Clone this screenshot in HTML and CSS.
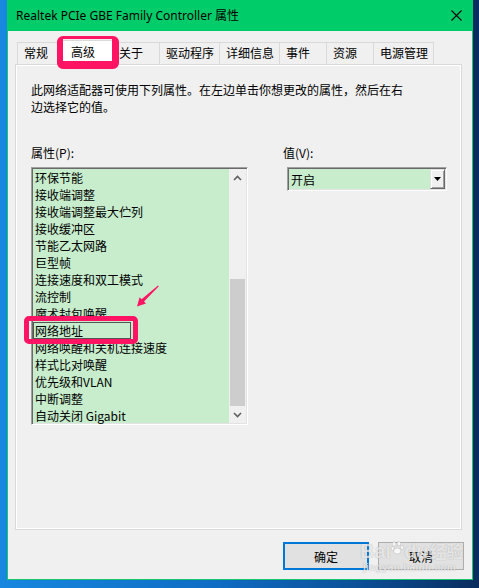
FILE: index.html
```html
<!DOCTYPE html>
<html lang="zh-CN">
<head>
<meta charset="utf-8">
<title>Realtek PCIe GBE Family Controller 属性</title>
<link rel="stylesheet" href="styles.css">
</head>
<body>
<div class="window">
  <div class="titlebar">
    <span class="title">Realtek PCIe GBE Family Controller 属性</span>
    <svg class="close" width="11" height="11" viewBox="0 0 11 11"><path d="M0.5 0.5 L10.5 10.5 M10.5 0.5 L0.5 10.5" stroke="#000" stroke-width="1.1" fill="none"/></svg>
  </div>
  <div class="content">
    <div class="tabs">
      <div class="tab">常规</div>
      <div class="tab selected">高级</div>
      <div class="tab">关于</div>
      <div class="tab">驱动程序</div>
      <div class="tab">详细信息</div>
      <div class="tab">事件</div>
      <div class="tab">资源</div>
      <div class="tab">电源管理</div>
      <div class="mark mark-tab"></div>
    </div>
    <div class="panel">
      <p class="desc">此网络适配器可使用下列属性。在左边单击你想更改的属性，然后在右<br>边选择它的值。</p>
      <div class="fields">
        <div class="col-left">
          <div class="label">属性(P):</div>
          <div class="listbox">
            <ul class="items">
              <li>环保节能</li>
              <li>接收端调整</li>
              <li>接收端调整最大伫列</li>
              <li>接收缓冲区</li>
              <li>节能乙太网路</li>
              <li>巨型帧</li>
              <li>连接速度和双工模式</li>
              <li>流控制</li>
              <li>魔术封包唤醒</li>
              <li class="sel">网络地址</li>
              <li>网络唤醒和关机连接速度</li>
              <li>样式比对唤醒</li>
              <li>优先级和VLAN</li>
              <li>中断调整</li>
              <li>自动关闭 Gigabit</li>
            </ul>
            <div class="scrollbar">
              <div class="sb-btn"><svg width="9" height="6" viewBox="0 0 9 6"><path d="M1 5 L4.5 1.5 L8 5" stroke="#606060" stroke-width="1.6" fill="none"/></svg></div>
              <div class="sb-track"><div class="sb-thumb"></div></div>
              <div class="sb-btn"><svg width="9" height="6" viewBox="0 0 9 6"><path d="M1 1 L4.5 4.5 L8 1" stroke="#606060" stroke-width="1.6" fill="none"/></svg></div>
            </div>
          </div>
        </div>
        <div class="col-right">
          <div class="label label-v">值(V):</div>
          <div class="combo">
            <span class="combo-text">开启</span>
            <div class="combo-btn"><svg width="7" height="4" viewBox="0 0 7 4"><path d="M0 0 H7 L3.5 4 Z" fill="#000"/></svg></div>
          </div>
        </div>
      </div>
      <svg class="arrow" width="35" height="30" viewBox="0 0 35 30"><path d="M28 5.5 L28.8 6.3 L14 21.6 L16 23.6 L7 26.5 L9.6 17.3 L11.6 19.2 Z" fill="#ff1464"/></svg>
      <div class="mark mark-item"></div>
    </div>
    <div class="buttons">
      <button class="btn primary">确定</button>
      <button class="btn">取消</button>
    </div>
    <div class="watermark">
      <div class="wm-big">Bai<svg class="paw" width="13" height="16" viewBox="0 0 13 16"><g fill="rgba(255,255,255,0.75)" stroke="rgba(0,0,0,0.18)" stroke-width="0.6"><ellipse cx="3" cy="3" rx="1.8" ry="2.3"/><ellipse cx="8" cy="2.5" rx="1.8" ry="2.3"/><ellipse cx="11" cy="6.5" rx="1.6" ry="2"/><ellipse cx="1.6" cy="7.5" rx="1.5" ry="2"/><ellipse cx="6.3" cy="10" rx="3.6" ry="3"/></g></svg>du<span class="wm-cn">经验</span></div>
      <div class="wm-small">jingyan.baidu.com</div>
    </div>
  </div>
</div>
</body>
</html>
```

FILE: styles.css
```css
html, body {
  margin: 0;
  padding: 0;
}
body {
  width: 479px;
  height: 588px;
  overflow: hidden;
  box-sizing: border-box;
  padding-left: 7px;
  background: linear-gradient(90deg, #1787df 0%, #0f6cc4 45%, #0b4f97 75%, #0a2c5e 100%);
  font-family: "Noto Sans CJK SC", "Noto Sans", sans-serif;
  font-size: 12px;
  color: #000;
}
.window {
  width: 466px;
  height: 580px;
  box-sizing: border-box;
  border: 1px solid #19c86b;
  border-top: none;
  background: #f0f0f0;
  display: flex;
  flex-direction: column;
}
.titlebar {
  height: 31px;
  background: #00cc6a;
  margin: 0 -1px;
  display: flex;
  align-items: center;
  justify-content: space-between;
  padding: 0 11px 0 9px;
  flex: none;
}
.title {
  font-family: "Noto Sans", "Noto Sans CJK SC", sans-serif;
  font-size: 12px;
  line-height: 16px;
  color: #000;
}
.close {
  display: block;
}
.content {
  position: relative;
  flex: 1;
  display: flex;
  flex-direction: column;
}
.tabs {
  position: relative;
  display: flex;
  height: 24px;
  margin-top: 9px;
  padding-left: 9px;
  z-index: 2;
}
.tab {
  box-sizing: border-box;
  min-width: 48px;
  height: 22px;
  margin-top: 2px;
  margin-right: -1px;
  padding: 0 5px 0 6px;
  border: 1px solid #d9d9d9;
  border-bottom: none;
  background: #f0f0f0;
  line-height: 20px;
  white-space: nowrap;
}
.tab:last-of-type {
  margin-right: 0;
}
.tab.selected {
  height: 25px;
  margin-top: 0;
  margin-left: -2px;
  margin-right: -3px;
  min-width: 53px;
  padding-left: 8px;
  background: #fff;
  position: relative;
  z-index: 1;
  line-height: 22px;
}
.mark {
  position: absolute;
  box-sizing: border-box;
  border-color: #ff1464;
  border-style: solid;
  pointer-events: none;
}
.mark-tab {
  left: 49px;
  top: -4px;
  width: 62px;
  height: 33px;
  border-width: 3px 7px 8px 6px;
  border-radius: 6px;
  z-index: 3;
}
.panel {
  position: relative;
  box-sizing: border-box;
  width: 447px;
  height: 466px;
  margin-left: 7px;
  border: 1px solid #d9d9d9;
  box-shadow: inset 1px 1px 0 #fff, inset -1px -1px 0 #fff;
  padding: 16px 15px 0 15px;
}
.desc {
  margin: 0;
  line-height: 17px;
}
.fields {
  margin-top: 29px;
  display: grid;
  grid-template-columns: 217px 164px;
  column-gap: 35px;
}
.label {
  line-height: 17px;
  height: 17px;
  margin-bottom: 6px;
}
.listbox {
  box-sizing: border-box;
  width: 217px;
  height: 258px;
  border-style: solid;
  border-width: 1px;
  border-color: #a0a0a0 #fff #fff #a0a0a0;
  box-shadow: inset 1px 1px 0 #696969, inset -1px -1px 0 #e3e3e3;
  background: #c7edcc;
  display: flex;
  padding: 1px;
}
.items {
  list-style: none;
  margin: 0;
  padding: 0;
  flex: 1;
}
.items li {
  height: 17px;
  line-height: 17px;
  padding-left: 2px;
  white-space: nowrap;
}
.items li.sel {
  box-sizing: border-box;
  width: 98px;
  border: 1px solid #555;
  padding-left: 1px;
  line-height: 15px;
}
.scrollbar {
  width: 17px;
  background: #f0f0f0;
  display: flex;
  flex-direction: column;
}
.sb-btn {
  height: 17px;
  display: flex;
  align-items: center;
  justify-content: center;
  flex: none;
}
.sb-track {
  flex: 1;
  padding: 0 1px;
  display: flex;
  flex-direction: column;
  justify-content: flex-end;
}
.sb-thumb {
  height: 127px;
  background: #cdcdcd;
}
.combo {
  box-sizing: border-box;
  width: 160px;
  height: 24px;
  margin-left: 4px;
  border-style: solid;
  border-width: 1px;
  border-color: #a0a0a0 #fff #fff #a0a0a0;
  box-shadow: inset 1px 1px 0 #696969, inset -1px -1px 0 #e3e3e3;
  background: #c7edcc;
  display: flex;
  align-items: center;
  justify-content: space-between;
  padding: 1px 1px 1px 3px;
}
.combo-text {
  line-height: 17px;
}
.combo-btn {
  box-sizing: border-box;
  width: 15px;
  height: 20px;
  background: #f0f0f0;
  border-style: solid;
  border-width: 1px;
  border-color: #e3e3e3 #696969 #696969 #e3e3e3;
  box-shadow: inset 1px 1px 0 #fff, inset -1px -1px 0 #a0a0a0;
  display: flex;
  align-items: center;
  justify-content: center;
}
.combo-btn svg {
  display: block;
}
.arrow {
  position: absolute;
  left: 114px;
  top: 215px;
}
.mark-item {
  left: 8px;
  top: 251px;
  width: 114px;
  height: 28px;
  border-width: 5px;
  border-radius: 5px;
}
.buttons {
  display: flex;
  justify-content: flex-end;
  gap: 9px;
  margin-top: 12px;
  padding-right: 8px;
}
.btn {
  box-sizing: border-box;
  width: 86px;
  height: 28px;
  margin: 0;
  padding: 0;
  background: #e1e1e1;
  border: 1px solid #adadad;
  font-family: "Noto Sans CJK SC", "Noto Sans", sans-serif;
  font-size: 12px;
  color: #000;
}
.btn.primary {
  border: 2px solid #0078d7;
}
.watermark {
  position: absolute;
  left: 352px;
  top: 509px;
  pointer-events: none;
  color: rgba(255, 255, 255, 0.72);
  text-shadow: 0 0 1px rgba(0, 0, 0, 0.3);
  z-index: 5;
}
.wm-big {
  font-family: "Liberation Sans", sans-serif;
  font-weight: bold;
  font-size: 20px;
  line-height: 22px;
  white-space: nowrap;
}
.paw {
  display: inline-block;
  vertical-align: top;
  margin-top: 1px;
}
.wm-cn {
  font-family: "Noto Sans CJK SC", sans-serif;
  font-size: 17px;
  margin-left: 1px;
}
.wm-small {
  font-family: "Liberation Sans", sans-serif;
  font-size: 10px;
  font-weight: bold;
  line-height: 12px;
  margin-left: 3px;
  letter-spacing: 0.3px;
}
```
